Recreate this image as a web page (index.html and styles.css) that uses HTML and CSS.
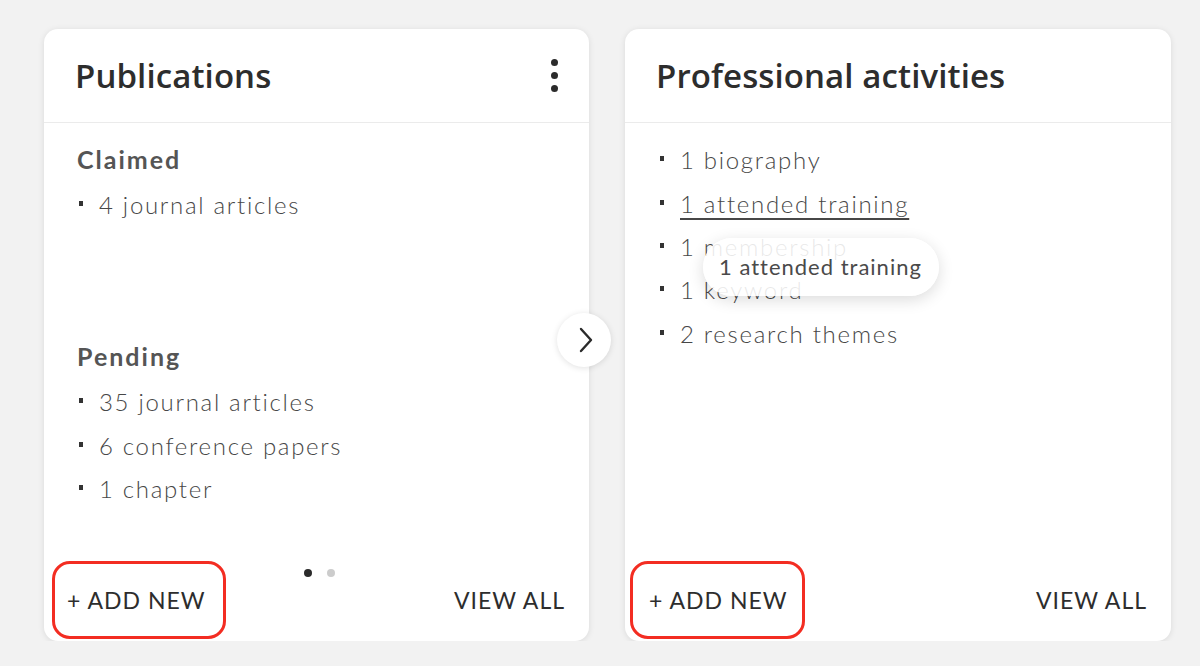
FILE: index.html
```html
<!DOCTYPE html>
<html lang="en">
<head>
    <meta charset="UTF-8">
    <meta name="viewport" content="width=device-width, initial-scale=1.0">
    <title>Profile cards</title>
    <link rel="stylesheet" href="styles.css">
</head>
<body>

<div class="cards">
    <div class="card">
        <div class="card-header">
            <h2>Publications</h2>
            <button class="kebab" aria-label="More options">
                <span></span><span></span><span></span>
            </button>
        </div>
        <div class="card-body">
            <div class="group group-claimed">
                <h3>Claimed</h3>
                <ul class="items">
                    <li>4 journal articles</li>
                </ul>
            </div>
            <div class="group">
                <h3>Pending</h3>
                <ul class="items">
                    <li>35 journal articles</li>
                    <li>6 conference papers</li>
                    <li>1 chapter</li>
                </ul>
            </div>
        </div>
        <div class="pager">
            <span class="dot active"></span>
            <span class="dot"></span>
        </div>
        <div class="card-footer">
            <button class="btn btn-add">+ ADD NEW</button>
            <button class="btn">VIEW ALL</button>
        </div>
        <button class="next" aria-label="Next">
            <svg width="20" height="28" viewBox="0 0 20 28"><path d="M5 3 L15 14 L5 25" fill="none" stroke="#2b2b2b" stroke-width="2.4" stroke-linecap="round" stroke-linejoin="round"/></svg>
        </button>
    </div>

    <div class="card">
        <div class="card-header">
            <h2>Professional activities</h2>
        </div>
        <div class="card-body">
            <ul class="items">
                <li>1 biography</li>
                <li><a href="#" class="link">1 attended training</a></li>
                <li>1 membership</li>
                <li>1 keyword</li>
                <li>2 research themes</li>
            </ul>
        </div>
        <div class="card-footer card-footer-alt">
            <button class="btn btn-add">+ ADD NEW</button>
            <button class="btn">VIEW ALL</button>
        </div>
        <div class="tooltip">1 attended training</div>
    </div>
</div>

</body>
</html>
```

FILE: styles.css
```css
body {
    margin: 0;
    background-color: #f2f2f2;
    font-family: "Lato", "Noto Sans", sans-serif;
    color: #555;
}

.cards {
    display: grid;
    grid-template-columns: 545px 546px;
    gap: 36px;
    padding: 29px 0 0 44px;
}

.card {
    position: relative;
    display: flex;
    flex-direction: column;
    height: 612px;
    background-color: #fff;
    border-radius: 14px;
    box-shadow: 0 1px 6px rgba(0, 0, 0, 0.1);
}

.card-header {
    display: flex;
    align-items: center;
    justify-content: space-between;
    height: 93px;
    padding: 0 31px 0 31px;
    border-bottom: 1px solid #ebebeb;
}

.card-header h2 {
    margin: 0;
    font-family: "Open Sans", sans-serif;
    font-size: 33px;
    font-weight: 600;
    letter-spacing: 0.1px;
    color: #2d2d2d;
}

.kebab {
    display: flex;
    flex-direction: column;
    gap: 6px;
    padding: 0;
    border: none;
    background: none;
}

.kebab span {
    width: 7px;
    height: 7px;
    border-radius: 50%;
    background-color: #2b2b2b;
}

.card-body {
    flex: 1;
    padding: 19px 32px 0 33px;
}

.group h3 {
    margin: 0 0 6px;
    font-size: 25px;
    font-weight: 700;
    line-height: 35px;
    letter-spacing: 2px;
    color: #555;
}

.group-claimed {
    height: 197px;
}

.items {
    margin: 0;
    padding: 0;
    list-style: none;
}

.items li {
    display: flex;
    align-items: center;
    height: 43.4px;
    font-size: 24px;
    font-weight: 300;
    letter-spacing: 1.7px;
    color: #474747;
}

.items li::before {
    content: "";
    width: 4px;
    height: 5px;
    margin: 0 16px 2px 2px;
    background-color: #333;
}

.card-body > .items {
    margin-top: -4px;
}

.link {
    color: #474747;
    text-decoration: underline;
    text-decoration-thickness: 2px;
    text-underline-offset: 5px;
}

.pager {
    display: flex;
    justify-content: center;
    gap: 15px;
    padding-left: 6px;
    margin-bottom: -17px;
}

.dot {
    width: 8px;
    height: 8px;
    border-radius: 50%;
    background-color: #ccc;
}

.dot.active {
    background-color: #2b2b2b;
}

.card-footer {
    display: flex;
    align-items: center;
    justify-content: space-between;
    padding: 0 24px 1px 8px;
    height: 80px;
}

.card-footer-alt {
    padding-left: 5px;
}

.btn {
    padding: 0;
    border: none;
    background: none;
    font-family: "Lato", sans-serif;
    font-size: 23px;
    letter-spacing: 1px;
    color: #2d2d2d;
}

.btn-add {
    width: 174px;
    height: 78px;
    padding-left: 12px;
    text-align: left;
    border: 3px solid #f32d22;
    border-radius: 18px;
}

.card-footer-alt .btn-add {
    width: 175px;
    padding-left: 16px;
}

.next {
    position: absolute;
    top: 284px;
    right: -22px;
    display: flex;
    align-items: center;
    justify-content: center;
    width: 54px;
    height: 54px;
    padding: 0 0 0 3px;
    border: none;
    border-radius: 50%;
    background-color: #fff;
    box-shadow: 0 1px 6px rgba(0, 0, 0, 0.12);
}

.tooltip {
    position: absolute;
    top: 209px;
    left: 78px;
    padding: 14px 17px 14px 16px;
    border-radius: 29px;
    background-color: rgba(255, 255, 255, 0.88);
    box-shadow: 0 4px 16px rgba(0, 0, 0, 0.14);
    font-size: 22px;
    line-height: 30px;
    letter-spacing: 1px;
    color: #4a4a4a;
}
```
